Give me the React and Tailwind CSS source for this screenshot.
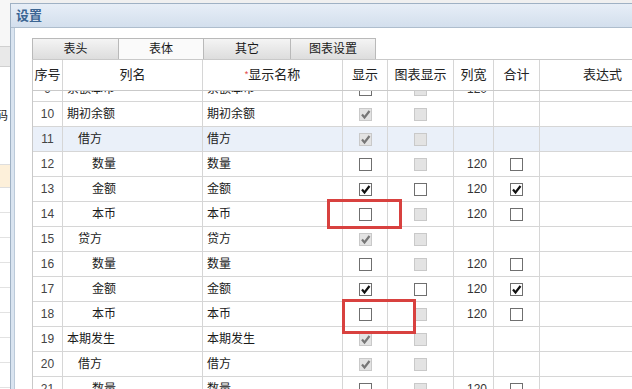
import React from "react"

const rows = [
  { n: 9, name: "余额本币", lvl: 0, show: "u", chart: "d", width: "120", sum: null },
  { n: 10, name: "期初余额", lvl: 0, show: "dc", chart: "d", width: "", sum: null },
  { n: 11, name: "借方", lvl: 1, show: "dc", chart: "d", width: "", sum: null, selected: true },
  { n: 12, name: "数量", lvl: 2, show: "u", chart: "d", width: "120", sum: "u" },
  { n: 13, name: "金额", lvl: 2, show: "c", chart: "u", width: "120", sum: "c" },
  { n: 14, name: "本币", lvl: 2, show: "u", chart: "d", width: "120", sum: "u" },
  { n: 15, name: "贷方", lvl: 1, show: "dc", chart: "d", width: "", sum: null },
  { n: 16, name: "数量", lvl: 2, show: "u", chart: "d", width: "120", sum: "u" },
  { n: 17, name: "金额", lvl: 2, show: "c", chart: "u", width: "120", sum: "c" },
  { n: 18, name: "本币", lvl: 2, show: "u", chart: "d", width: "120", sum: "u" },
  { n: 19, name: "本期发生", lvl: 0, show: "dc", chart: "d", width: "", sum: null },
  { n: 20, name: "借方", lvl: 1, show: "dc", chart: "d", width: "", sum: null },
  { n: 21, name: "数量", lvl: 2, show: "u", chart: "d", width: "120", sum: "u" },
]

const indent = ["pl-[4px]", "pl-[15px]", "pl-[29px]"]

// Checkbox: u = unchecked, c = checked, d = disabled, dc = disabled checked
function Check({ state }) {
  if (!state) return null
  const disabled = state === "d" || state === "dc"
  const checked = state === "c" || state === "dc"
  return (
    <div
      className={
        "w-[13px] h-[13px] border flex items-center justify-center " +
        (disabled ? "bg-[#e3e3e3] border-[#c9c9c9]" : "bg-white border-[#6f6f6f]")
      }
    >
      {checked && (
        <svg width="11" height="11" viewBox="0 0 11 11">
          <path
            d="M2 5.5 L4.5 8.5 L9.5 2"
            fill="none"
            stroke={disabled ? "#777" : "#111"}
            strokeWidth="2.2"
          />
        </svg>
      )}
    </div>
  )
}

function Row({ r }) {
  return (
    <div className={"flex h-[25px] border-b border-[#d6d6d6] " + (r.selected ? "bg-[#eaf0f9]" : "bg-white")}>
      <div className="w-[30px] shrink-0 border-r border-[#d6d6d6] flex items-center justify-center text-[#444]">{r.n}</div>
      <div className={"w-[140px] shrink-0 border-r border-[#d6d6d6] flex items-center " + indent[r.lvl]}>{r.name}</div>
      <div className="w-[140px] shrink-0 border-r border-[#d6d6d6] flex items-center pl-[4px]">{r.name}</div>
      <div className="w-[45px] shrink-0 border-r border-[#d6d6d6] flex items-center justify-center"><Check state={r.show} /></div>
      <div className="w-[66px] shrink-0 border-r border-[#d6d6d6] flex items-center justify-center"><Check state={r.chart} /></div>
      <div className="w-[40px] shrink-0 border-r border-[#d6d6d6] flex items-center justify-end pr-[6px] text-[#333]">{r.width}</div>
      <div className="w-[46px] shrink-0 border-r border-[#d6d6d6] flex items-center justify-center"><Check state={r.sum} /></div>
      <div className="flex-1" />
    </div>
  )
}

function Tab({ label, w, active }) {
  return (
    <div
      className={
        "h-[21px] border border-b-0 border-[#b9b9b9] -ml-px first:ml-0 flex items-center justify-center " +
        w +
        (active ? " bg-[#fafafa] relative z-10" : " bg-gradient-to-b from-[#f4f4f4] to-[#dddddd]")
      }
    >
      {label}
    </div>
  )
}

export default function App() {
  return (
    <div
      className="relative w-[632px] h-[389px] overflow-hidden bg-[#f0f0f0] flex text-[12px] text-[#1a1a1a]"
      style={{ fontFamily: '"Liberation Sans", "Noto Sans CJK SC", sans-serif' }}
    >
      {/* background window behind the dialog */}
      <div className="w-[10px] shrink-0 bg-white flex flex-col overflow-hidden">
        <div className="h-[47px] bg-[#f7f7f7] border-b border-[#d0d0d0]" />
        <div className="h-[20px] bg-[#e9e9e9] border-b border-[#d0d0d0]" />
        <div className="h-[98px] border-b border-[#dedede] flex items-center">
          <span className="-ml-[4px] text-[12px]">码</span>
        </div>
        <div className="h-[23px] bg-[#fdf0da] border-b border-[#dedede]" />
        {Array.from({ length: 8 }).map((_, i) => (
          <div key={i} className="h-[25px] shrink-0 border-b border-[#e2e2e2]" />
        ))}
      </div>

      {/* dialog */}
      <div className="flex-1 mt-[3px] border-l border-t border-[#9fb1c4] flex flex-col">
        <div className="h-[24px] shrink-0 bg-gradient-to-b from-[#e7eef7] to-[#d3dfed] border-b border-[#aebdcd] flex items-center pl-[5px]">
          <span className="font-bold text-[13px] text-[#3b6593]">设置</span>
        </div>
        <div className="flex-1 flex min-h-0">
          <div className="w-[4px] shrink-0 bg-[#d9e4f0] border-r border-[#bccad9]" />
          <div className="flex-1 bg-white flex flex-col min-h-0 pl-[17px] pt-[10px]">
            {/* tabs */}
            <div className="flex shrink-0">
              <Tab label="表头" w="w-[87px]" />
              <Tab label="表体" w="w-[86px]" active />
              <Tab label="其它" w="w-[88px]" />
              <Tab label="图表设置" w="w-[86px]" />
            </div>

            {/* grid */}
            <div className="flex-1 flex flex-col min-h-0 border-l border-t border-[#c9c9c9] bg-white">
              <div className="flex h-[31px] shrink-0 border-b border-[#c9c9c9] text-[13px] text-[#222] relative z-10 bg-white">
                <div className="w-[30px] shrink-0 border-r border-[#d6d6d6] flex items-center justify-center">序号</div>
                <div className="w-[140px] shrink-0 border-r border-[#d6d6d6] flex items-center justify-center">列名</div>
                <div className="w-[140px] shrink-0 border-r border-[#d6d6d6] flex items-center justify-center">
                  <span className="text-[#e0403a] text-[9px] self-start mt-[8px]">*</span>显示名称
                </div>
                <div className="w-[45px] shrink-0 border-r border-[#d6d6d6] flex items-center justify-center">显示</div>
                <div className="w-[66px] shrink-0 border-r border-[#d6d6d6] flex items-center justify-center">图表显示</div>
                <div className="w-[40px] shrink-0 border-r border-[#d6d6d6] flex items-center justify-center">列宽</div>
                <div className="w-[46px] shrink-0 border-r border-[#d6d6d6] flex items-center justify-center">合计</div>
                <div className="flex-1 flex items-center pl-[43px]">表达式</div>
              </div>
              <div className="flex-1 min-h-0 overflow-hidden">
                <div className="-mt-[14px]">
                  {rows.map((r) => (
                    <Row key={r.n} r={r} />
                  ))}
                </div>
              </div>
            </div>
          </div>
        </div>
      </div>

      {/* red annotation boxes */}
      <div className="absolute left-[327px] top-[199px] w-[75px] h-[30px] border-[3px] border-[#d8413f]" />
      <div className="absolute left-[342px] top-[299px] w-[74px] h-[35px] border-[3px] border-[#d8413f]" />
    </div>
  )
}
